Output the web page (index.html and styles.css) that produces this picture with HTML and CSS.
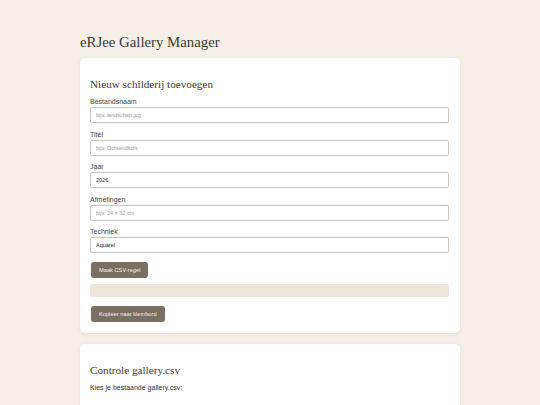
FILE: index.html
```html
<!DOCTYPE html>
<html lang="nl">
<head>
    <meta charset="UTF-8">
    <meta name="viewport" content="width=device-width, initial-scale=1.0">
    <title>eRJee Gallery Manager</title>
    <link rel="stylesheet" href="styles.css">
</head>
<body>
    <div class="wrap">
        <h1>eRJee Gallery Manager</h1>

        <div class="card">
            <h2>Nieuw schilderij toevoegen</h2>

            <div class="field">
                <label>Bestandsnaam</label>
                <input type="text" placeholder="bijv. landschap.jpg">
            </div>
            <div class="field">
                <label>Titel</label>
                <input type="text" placeholder="bijv. Ochtendlicht">
            </div>
            <div class="field">
                <label>Jaar</label>
                <input type="text" value="2026">
            </div>
            <div class="field">
                <label>Afmetingen</label>
                <input type="text" placeholder="bijv. 24 × 32 cm">
            </div>
            <div class="field">
                <label>Techniek</label>
                <input type="text" value="Aquarel">
            </div>

            <button class="btn">Maak CSV-regel</button>
            <div class="output"></div>
            <button class="btn">Kopieer naar klembord</button>
        </div>

        <div class="card">
            <h2>Controle gallery.csv</h2>
            <p class="hint">Kies je bestaande gallery.csv:</p>
            <div class="file-btn"></div>
        </div>
    </div>
</body>
</html>
```

FILE: styles.css
```css
* {
    margin: 0;
    padding: 0;
    box-sizing: border-box;
}

body {
    font-family: "Liberation Sans", Arial, sans-serif;
    background-color: #f5efe8;
    color: #333;
}

.wrap {
    width: 380px;
    margin: 0 auto;
    padding-top: 33px;
}

h1 {
    font-family: "Liberation Serif", Georgia, serif;
    font-weight: normal;
    font-size: 14.8px;
    line-height: 18px;
    color: #3d3a35;
    margin-bottom: 7px;
}

.card {
    background-color: #fff;
    border-radius: 5px;
    box-shadow: 0 1px 4px rgba(120, 100, 80, 0.12);
    padding: 19px 11px 11px 10px;
    margin-bottom: 11px;
}

h2 {
    font-family: "Liberation Serif", Georgia, serif;
    font-weight: normal;
    font-size: 11.2px;
    line-height: 14px;
    color: #3d3a35;
    margin-bottom: 6px;
}

.field {
    margin-bottom: 6.5px;
}

label {
    display: block;
    font-size: 7px;
    line-height: 9px;
    color: #444;
    margin-bottom: 1px;
}

input {
    display: block;
    width: 100%;
    height: 16px;
    border: 1px solid #c8c8c8;
    border-radius: 2px;
    padding: 0 5px;
    font-family: "Liberation Sans", Arial, sans-serif;
    font-size: 5.5px;
    color: #222;
    background: #fff;
}

input::placeholder {
    color: #999;
}

.btn {
    display: block;
    height: 16px;
    padding: 0 8px;
    margin-top: 9px;
    margin-left: 1px;
    background-color: #7b6f63;
    color: #f4efe8;
    border: none;
    border-radius: 3px;
    font-family: "Liberation Sans", Arial, sans-serif;
    font-size: 5.7px;
}

.output {
    height: 13px;
    margin-top: 6px;
    background-color: #ede6db;
    border-radius: 2px;
}

.hint {
    font-size: 7px;
    line-height: 9px;
    color: #333;
    margin-top: 6px;
}

.file-btn {
    width: 36px;
    height: 8px;
    margin: 13px 0 0 5px;
    border: 1px solid #c8c8c8;
    border-bottom: none;
    border-radius: 2px 2px 0 0;
}
```
